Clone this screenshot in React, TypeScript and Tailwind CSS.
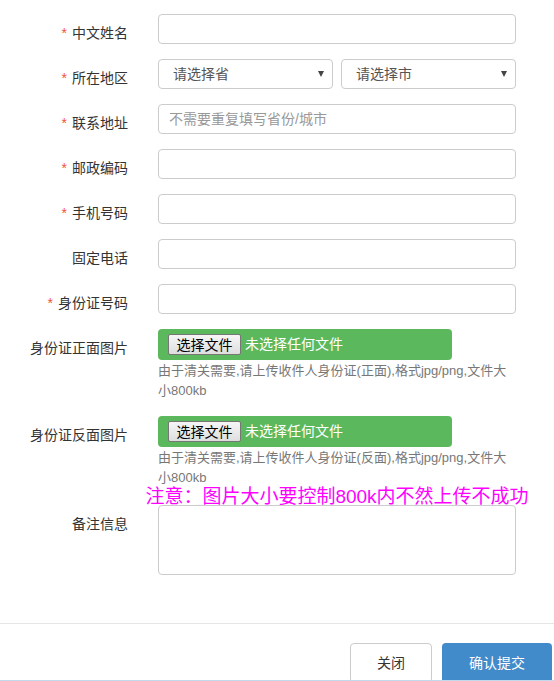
const font = { fontFamily: '"Liberation Sans", "Noto Sans CJK SC", sans-serif' };

type Row = { label: string; required?: boolean; kind: "text" | "region"; placeholder?: string };

const rows: Row[] = [
  { label: "中文姓名", required: true, kind: "text" },
  { label: "所在地区", required: true, kind: "region" },
  { label: "联系地址", required: true, kind: "text", placeholder: "不需要重复填写省份/城市" },
  { label: "邮政编码", required: true, kind: "text" },
  { label: "手机号码", required: true, kind: "text" },
  { label: "固定电话", kind: "text" },
  { label: "身份证号码", required: true, kind: "text" },
];

const Label = ({ text, required }: { text: string; required?: boolean }) => (
  <label className="w-[128px] shrink-0 text-right pt-[9px] leading-5 text-[14px] text-[#333]">
    {required && <span className="text-[#f0533c] mr-[5px]">*</span>}
    {text}
  </label>
);

const FakeSelect = ({ text }: { text: string }) => (
  <div className="flex-1 h-[30px] flex items-center justify-between border border-[#ccc] rounded-[4px] pl-[14px] pr-[8px] text-[14px] text-[#555] bg-white">
    <span>{text}</span>
    <span className="w-0 h-0 border-x-[3px] border-x-transparent border-t-[6px] border-t-[#444]" />
  </div>
);

const FileField = ({ side, last }: { side: string; last?: boolean }) => (
  <div className={last ? "flex items-start" : "flex items-start mb-[15px]"}>
    <Label text={`身份证${side}面图片`} />
    <div className="ml-[30px] w-[358px]">
      <div className="w-[294px] h-[31px] bg-[#5cb85c] rounded-[4px] flex items-center pl-[10px]">
        <button className="h-[21px] w-[73px] border border-[#767676] rounded-[2px] bg-gradient-to-b from-[#f6f6f6] to-[#dedede] text-[14px] text-black leading-none">
          选择文件
        </button>
        <span className="ml-[4px] text-[14px] text-white">未选择任何文件</span>
      </div>
      <p className="mt-px text-[13px] leading-5 text-[#777]">
        由于清关需要,请上传收件人身份证({side}面),格式jpg/png,文件大
        <br />
        小800kb
      </p>
    </div>
  </div>
);

export default function App() {
  return (
    <div className="w-[554px] bg-white pt-[14px]" style={font}>
      {rows.map((r) => (
        <div key={r.label} className="flex items-start mb-[15px]">
          <Label text={r.label} required={r.required} />
          <div className="ml-[30px] w-[358px]">
            {r.kind === "region" ? (
              <div className="flex gap-[8px]">
                <FakeSelect text="请选择省" />
                <FakeSelect text="请选择市" />
              </div>
            ) : (
              <input
                className="w-full h-[30px] border border-[#ccc] rounded-[4px] px-[10px] text-[14px] text-[#555] placeholder:text-[#999] outline-none"
                placeholder={r.placeholder}
              />
            )}
          </div>
        </div>
      ))}

      <FileField side="正" />
      <FileField side="反" last />

      <div className="flex">
        <div className="w-[128px] shrink-0" />
        <div className="ml-[30px] w-[358px] h-[17px] flex justify-center">
          <span className="whitespace-nowrap text-[19px] leading-[17px] text-[#f0f]">
            注意：图片大小要控制800k内不然上传不成功
          </span>
        </div>
      </div>

      <div className="flex items-start">
        <Label text="备注信息" />
        <div className="ml-[30px] w-[358px]">
          <textarea className="block w-full h-[70px] border border-[#ccc] rounded-[4px] px-[10px] py-[6px] text-[14px] resize-none outline-none" />
        </div>
      </div>

      <div className="mt-[48px] h-[58px] overflow-hidden border-t border-t-[#e5e5e5] border-b border-b-[#c5d8ec] pt-[19px] pr-[2px] flex justify-end items-start gap-[10px]">
        <button className="w-[82px] h-[40px] shrink-0 border border-[#ccc] rounded-[4px] bg-white text-[14px] text-[#333]">
          关闭
        </button>
        <button className="w-[110px] h-[40px] shrink-0 rounded-[4px] bg-[#428bca] text-[14px] text-white">
          确认提交
        </button>
      </div>
    </div>
  );
}
